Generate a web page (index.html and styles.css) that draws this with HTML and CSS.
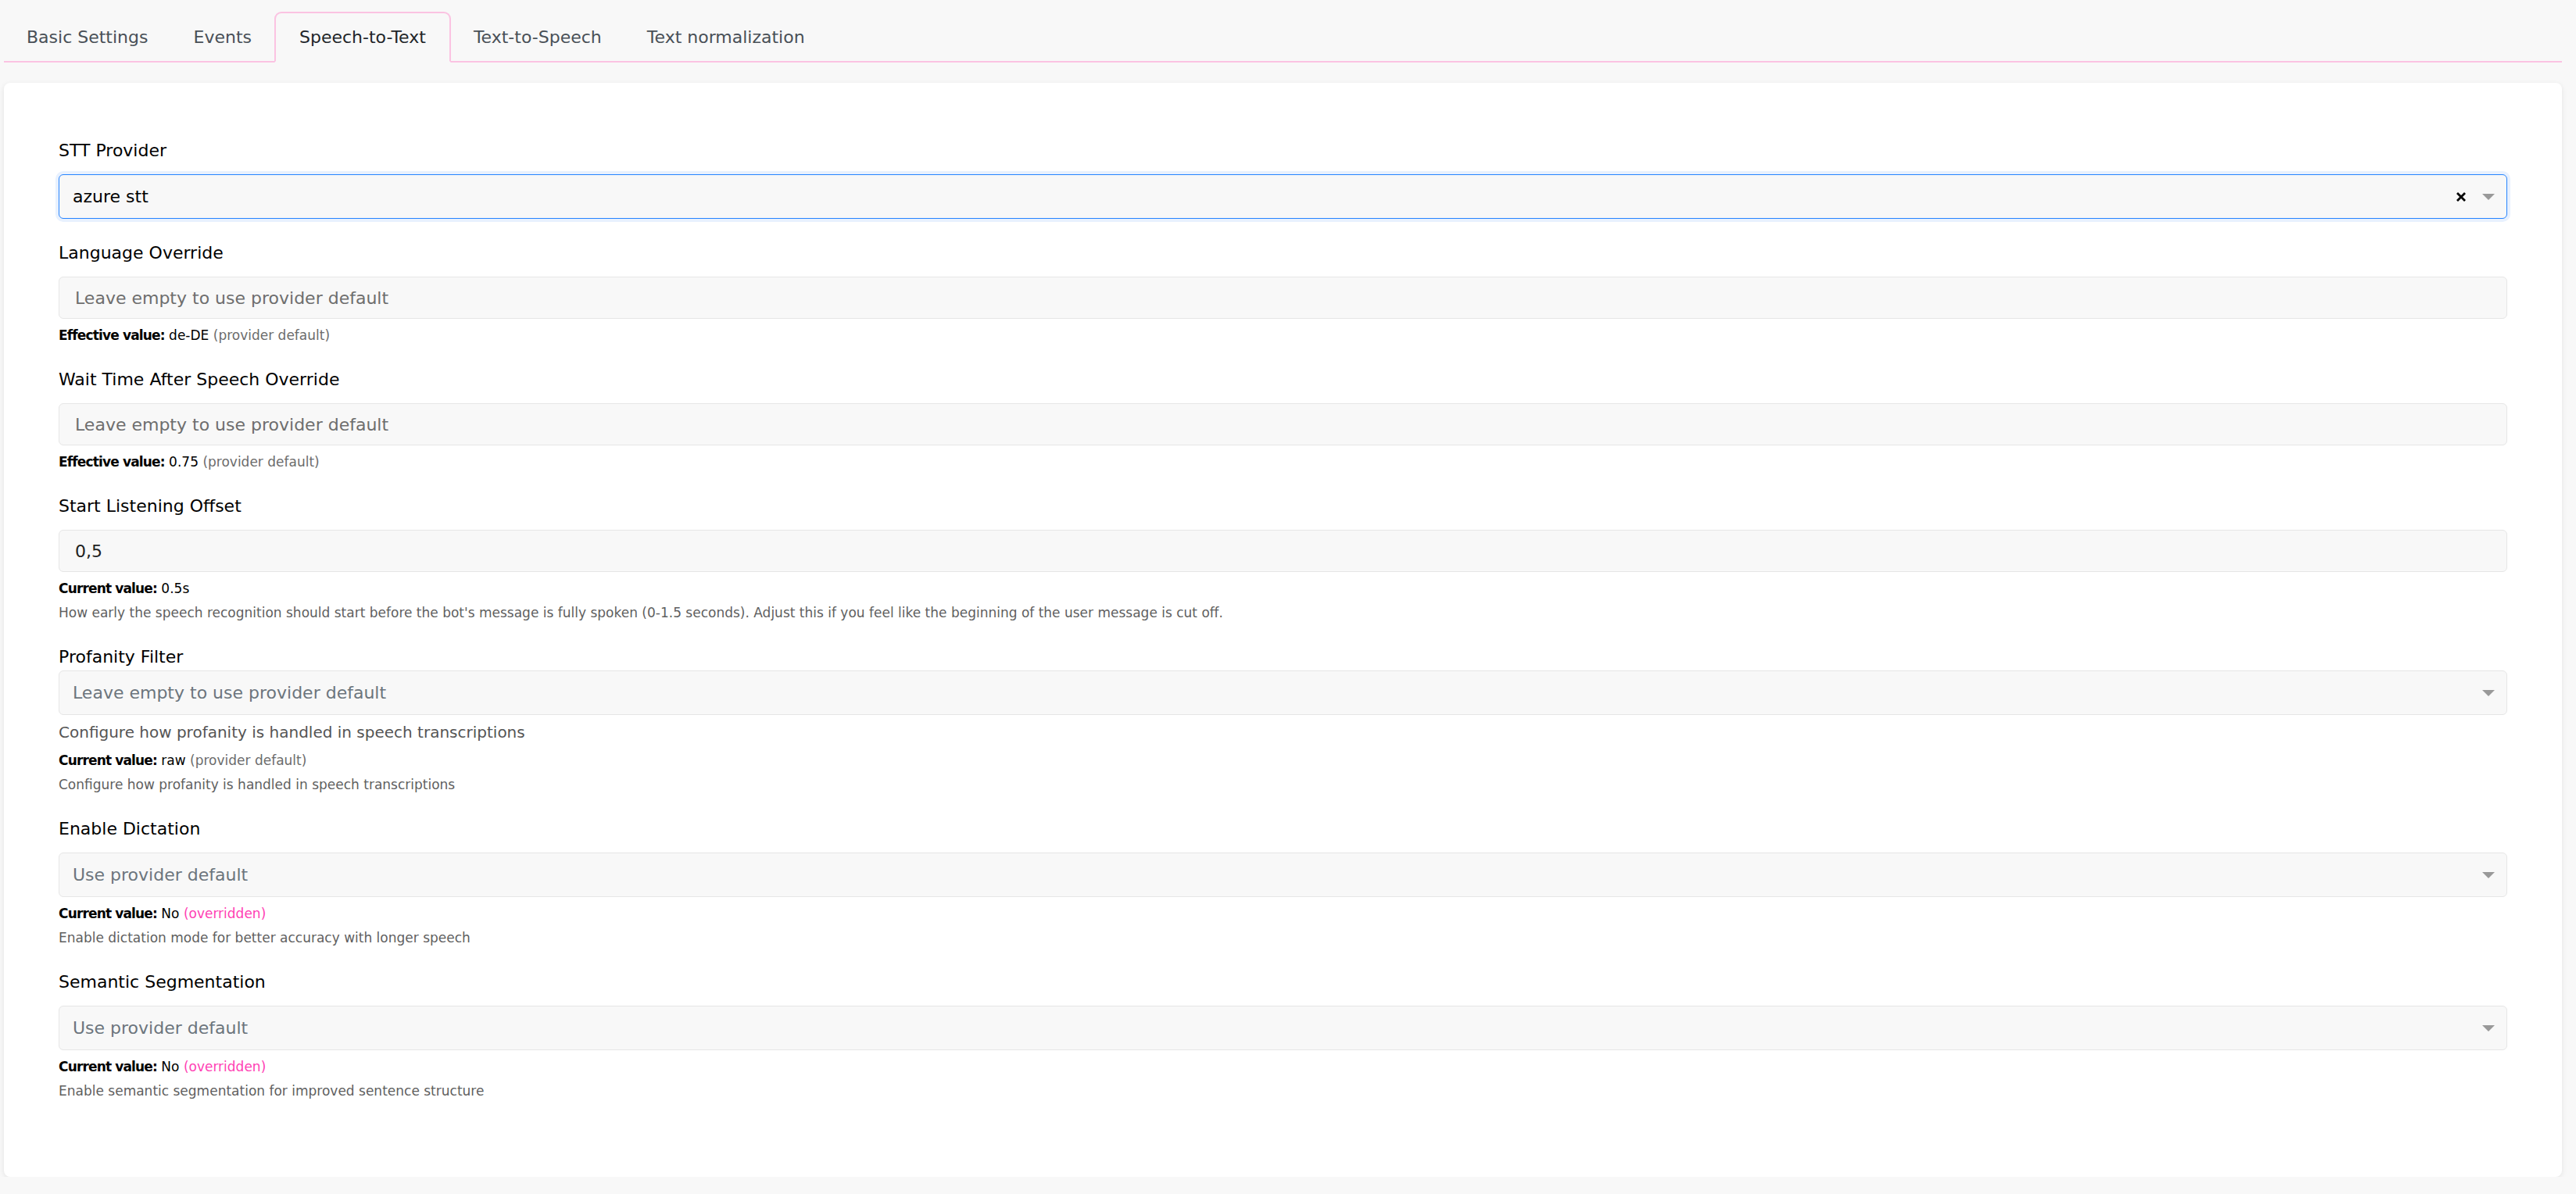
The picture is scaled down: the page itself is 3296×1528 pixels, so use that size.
FILE: index.html
```html
<!DOCTYPE html>
<html lang="en">
<head>
    <meta charset="UTF-8">
    <meta name="viewport" content="width=device-width, initial-scale=1.0">
    <title>Speech-to-Text Settings</title>
    <link rel="stylesheet" href="styles.css">
</head>
<body>
    <div class="settings-page">
        <div class="tabs">
            <button class="tab">Basic Settings</button>
            <button class="tab">Events</button>
            <button class="tab active">Speech-to-Text</button>
            <button class="tab">Text-to-Speech</button>
            <button class="tab">Text normalization</button>
        </div>

        <div class="settings-card">
            <div class="field">
                <label class="field-label">STT Provider</label>
                <div class="select is-focused">
                    <span class="select-value">azure stt</span>
                    <span class="select-indicators">
                        <svg class="clear-icon" width="14" height="14" viewBox="0 0 14 14">
                            <path d="M2 2L12 12M12 2L2 12" stroke="#000" stroke-width="2.8" fill="none"/>
                        </svg>
                        <svg class="caret" width="16" height="8" viewBox="0 0 16 8">
                            <polygon points="0,0 16,0 8,8" fill="#999"/>
                        </svg>
                    </span>
                </div>
            </div>

            <div class="field">
                <label class="field-label">Language Override</label>
                <input class="text-input" type="text" placeholder="Leave empty to use provider default">
                <div class="meta"><strong>Effective value:</strong> de-DE <span class="muted">(provider default)</span></div>
            </div>

            <div class="field">
                <label class="field-label">Wait Time After Speech Override</label>
                <input class="text-input" type="text" placeholder="Leave empty to use provider default">
                <div class="meta"><strong>Effective value:</strong> 0.75 <span class="muted">(provider default)</span></div>
            </div>

            <div class="field">
                <label class="field-label">Start Listening Offset</label>
                <input class="text-input" type="text" value="0,5">
                <div class="meta"><strong>Current value:</strong> 0.5s</div>
                <div class="hint">How early the speech recognition should start before the bot's message is fully spoken (0-1.5 seconds). Adjust this if you feel like the beginning of the user message is cut off.</div>
            </div>

            <div class="field">
                <label class="field-label tight">Profanity Filter</label>
                <div class="select">
                    <span class="select-placeholder">Leave empty to use provider default</span>
                    <span class="select-indicators">
                        <svg class="caret" width="16" height="8" viewBox="0 0 16 8">
                            <polygon points="0,0 16,0 8,8" fill="#999"/>
                        </svg>
                    </span>
                </div>
                <div class="description">Configure how profanity is handled in speech transcriptions</div>
                <div class="meta"><strong>Current value:</strong> raw <span class="muted">(provider default)</span></div>
                <div class="hint">Configure how profanity is handled in speech transcriptions</div>
            </div>

            <div class="field">
                <label class="field-label">Enable Dictation</label>
                <div class="select">
                    <span class="select-placeholder">Use provider default</span>
                    <span class="select-indicators">
                        <svg class="caret" width="16" height="8" viewBox="0 0 16 8">
                            <polygon points="0,0 16,0 8,8" fill="#999"/>
                        </svg>
                    </span>
                </div>
                <div class="meta"><strong>Current value:</strong> No <span class="overridden">(overridden)</span></div>
                <div class="hint">Enable dictation mode for better accuracy with longer speech</div>
            </div>

            <div class="field">
                <label class="field-label">Semantic Segmentation</label>
                <div class="select">
                    <span class="select-placeholder">Use provider default</span>
                    <span class="select-indicators">
                        <svg class="caret" width="16" height="8" viewBox="0 0 16 8">
                            <polygon points="0,0 16,0 8,8" fill="#999"/>
                        </svg>
                    </span>
                </div>
                <div class="meta"><strong>Current value:</strong> No <span class="overridden">(overridden)</span></div>
                <div class="hint">Enable semantic segmentation for improved sentence structure</div>
            </div>
        </div>
    </div>
</body>
</html>
```

FILE: styles.css
```css
body {
    margin: 0;
    background-color: #f8f8f8;
    font-family: "DejaVu Sans", sans-serif;
    color: #000;
}
.settings-page {
    padding: 15px 18px 0 5px;
}
.tabs {
    display: flex;
    border-bottom: 2px solid #fbc3e2;
}
.tab {
    font: inherit;
    font-size: 22px;
    line-height: 33px;
    padding: 14px 27px;
    margin-bottom: -2px;
    background: none;
    border: 2px solid transparent;
    border-radius: 9px 9px 0 0;
    color: #495057;
    cursor: pointer;
}
.tab.active {
    padding: 14px 30px;
    color: #212529;
    background-color: #f8f8f8;
    border-color: #fbc3e2;
    border-bottom-color: #f8f8f8;
}
.settings-card {
    margin-top: 26px;
    background-color: #fff;
    border-radius: 8px;
    box-shadow: 0 2px 7px rgba(0, 0, 0, 0.09);
    padding: 70px;
}
.field {
    margin-bottom: 27px;
}
.field-label {
    display: block;
    font-size: 22px;
    line-height: 33px;
    margin-bottom: 14px;
}
.field-label.tight {
    margin-bottom: 1px;
}
.text-input {
    display: block;
    width: 100%;
    box-sizing: border-box;
    height: 54px;
    padding: 0 20px;
    font: inherit;
    font-size: 22px;
    color: #222;
    background-color: #f8f8f8;
    border: 1px solid #e6e6e6;
    border-radius: 6px;
    outline: none;
}
.text-input::placeholder {
    color: #6e6e6e;
}
.select {
    display: flex;
    align-items: center;
    box-sizing: border-box;
    height: 57px;
    padding: 0 15px 0 17px;
    font-size: 22px;
    background-color: #f8f8f8;
    border: 1px solid #e6e6e6;
    border-radius: 6px;
}
.select.is-focused {
    border-color: #2684ff;
    box-shadow: 0 0 0 4px #e8f1fe;
}
.select-value {
    flex: 1;
    color: #000;
}
.select-placeholder {
    flex: 1;
    color: #6c757d;
}
.select-indicators {
    display: flex;
    align-items: center;
    gap: 20px;
}
.meta {
    font-size: 17px;
    line-height: 25px;
    margin-top: 9px;
}
.meta strong {
    letter-spacing: -0.05em;
}
.muted {
    color: #6c6c6c;
}
.overridden {
    color: #ff3fb4;
}
.hint {
    font-size: 17px;
    line-height: 25px;
    margin-top: 6px;
    color: #5f5f5f;
}
.description {
    font-size: 20px;
    line-height: 30px;
    margin-top: 7px;
    color: #555;
}
```
